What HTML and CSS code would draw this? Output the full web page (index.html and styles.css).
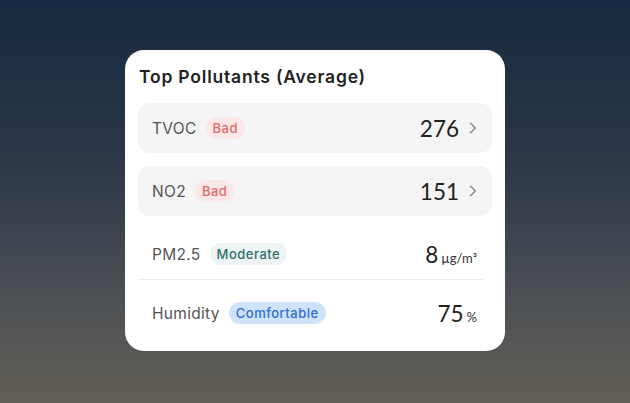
FILE: index.html
```html
<!DOCTYPE html>
<html lang="en">
<head>
<meta charset="utf-8">
<title>Top Pollutants</title>
<link rel="stylesheet" href="styles.css">
</head>
<body>
<main class="stage">
  <section class="card">
    <h2 class="title">Top Pollutants (Average)</h2>
    <ul class="list">
      <li class="row row--link">
        <div class="left"><span class="label">TVOC</span><span class="badge badge--bad">Bad</span></div>
        <div class="right"><span class="value">276</span>
          <svg class="chev" width="8" height="12" viewBox="0 0 8 12"><path d="M1.5 1.2 L6.3 6 L1.5 10.8" fill="none" stroke="#8a8a8a" stroke-width="1.5" stroke-linecap="round" stroke-linejoin="round"/></svg>
        </div>
      </li>
      <li class="row row--link">
        <div class="left"><span class="label">NO2</span><span class="badge badge--bad">Bad</span></div>
        <div class="right"><span class="value">151</span>
          <svg class="chev" width="8" height="12" viewBox="0 0 8 12"><path d="M1.5 1.2 L6.3 6 L1.5 10.8" fill="none" stroke="#8a8a8a" stroke-width="1.5" stroke-linecap="round" stroke-linejoin="round"/></svg>
        </div>
      </li>
      <li class="row row--plain row--divided">
        <div class="left"><span class="label">PM2.5</span><span class="badge badge--moderate">Moderate</span></div>
        <div class="right"><span class="value">8</span><span class="unit">µg/m³</span></div>
      </li>
      <li class="row row--plain row--last">
        <div class="left"><span class="label">Humidity</span><span class="badge badge--comfort">Comfortable</span></div>
        <div class="right"><span class="value">75</span><span class="unit">%</span></div>
      </li>
    </ul>
  </section>
</main>
</body>
</html>
```

FILE: styles.css
```css
* { box-sizing: border-box; }
html, body { margin: 0; padding: 0; }
body {
  width: 630px;
  height: 403px;
  background: linear-gradient(180deg, #172a41 0%, #2c3747 40%, #4e5155 75%, #625e55 100%);
  font-family: Inter, "Noto Sans", sans-serif;
}
.stage {
  height: 403px;
  display: flex;
  justify-content: center;
  padding-top: 50px;
}
.card {
  width: 380px;
  height: 301px;
  background: #fff;
  border-radius: 19px;
  padding: 14px 13px 13px 13px;
  display: flex;
  flex-direction: column;
}
.title {
  margin: 0 0 13px 1px;
  font-size: 17.5px;
  line-height: 26px;
  font-weight: 600;
  color: #222;
  letter-spacing: 0.8px;
}
.list {
  list-style: none;
  margin: 0;
  padding: 0;
  display: flex;
  flex-direction: column;
  gap: 13px;
}
.row {
  height: 50px;
  display: flex;
  align-items: center;
  justify-content: space-between;
}
.row--link {
  background: #f4f4f4;
  border-radius: 12px;
  padding: 0 15px 0 14px;
}
.row--plain {
  padding: 0 6px 0 14px;
  margin-right: 9px;
}
.row--divided {
  border-bottom: 1px solid #ececec;
  height: 51px;
}
.row--last {
  margin-top: -5px;
}
.left {
  display: flex;
  align-items: center;
  gap: 9px;
}
.label {
  font-size: 15.5px;
  color: #555;
  letter-spacing: 0.3px;
}
.badge {
  display: inline-flex;
  align-items: center;
  height: 22px;
  padding: 0 7px;
  border-radius: 11px;
  font-size: 13px;
  font-weight: 500;
  letter-spacing: 0.5px;
}
.badge--bad { background: #fbe7e7; color: #e16a6a; }
.badge--moderate { background: #eef3f3; color: #2f6f6c; }
.badge--comfort { background: #cfe3fd; color: #2d6fd3; }
.right {
  display: flex;
  align-items: baseline;
}
.row--link .right { align-items: center; }
.value {
  font-family: Lato, "Noto Sans", sans-serif;
  font-size: 22.5px;
  color: #222;
}
.chev { margin-left: 10px; }
.unit {
  font-family: Lato, "Noto Sans", sans-serif;
  font-size: 13px;
  color: #333;
  margin-left: 3px;
}
```
